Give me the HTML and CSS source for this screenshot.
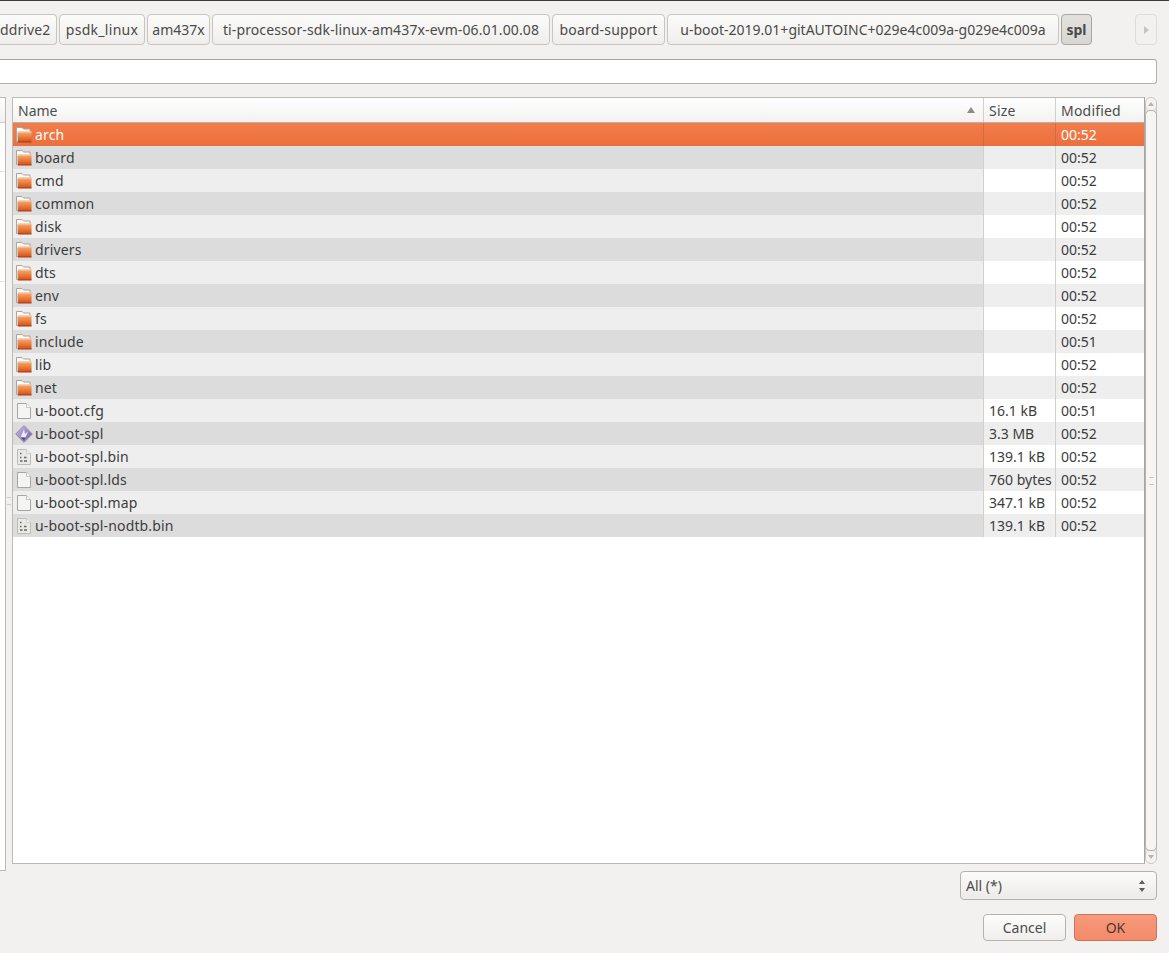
FILE: index.html
```html
<!DOCTYPE html>
<html lang="en">
<head>
<meta charset="utf-8">
<title>Open file</title>
<link rel="stylesheet" href="styles.css">
</head>
<body>
<svg class="defs" width="0" height="0" aria-hidden="true">
  <defs>
    <linearGradient id="fg" x1="0" y1="0" x2="0" y2="1"><stop offset="0" stop-color="#f5ad78"/><stop offset=".5" stop-color="#ec7f3c"/><stop offset="1" stop-color="#d24f1a"/></linearGradient>
    <linearGradient id="dg" x1="0" y1="0" x2="1" y2="1"><stop offset="0" stop-color="#cfc6ea"/><stop offset="1" stop-color="#6a52a6"/></linearGradient>
    <symbol id="folder" viewBox="0 0 16 16">
      <path d="M.5 14.500V.5h5.500l1.500 1.500h6.500v3.500h-12v9z" fill="#fbfbfa" stroke="#a8a4a0"/>
      <rect x="2" y="4.500" width="13.500" height="10.500" fill="url(#fg)"/>
      <rect x="2" y="4.500" width="13.500" height="1" fill="#f8cfae"/>
      <rect x="2" y="14.500" width="13.500" height="1" fill="#a8381a"/>
    </symbol>
    <symbol id="file" viewBox="0 0 16 16">
      <path d="M1.500.5h9l4 4v11h-13z" fill="#f4f4f3" stroke="#a6a6a4"/>
      <path d="M10.500.5v4h4" fill="#fff" stroke="#c4c4c2"/>
    </symbol>
    <symbol id="bin" viewBox="0 0 16 16">
      <path d="M1.500.5h9l4 4v11h-13z" fill="#e9e9e7" stroke="#bcbcba"/>
      <path d="M10.500.5v4h4" fill="#f6f6f5" stroke="#cfcfcd"/>
      <path d="M4 4.500h1.500M4 8.500h1.500M8 8.500h2.500M4 12h2.500M8 12h3" stroke="#66665f" stroke-width="1.300" fill="none"/>
    </symbol>
    <symbol id="exec" viewBox="0 0 18 18">
      <path d="M9 .7 17.300 9 9 17.300.7 9z" fill="url(#dg)" stroke="#8e8a99"/>
      <path d="M5.500 12.500 9 4.500 10 9l3-2.500-2.500 6z" fill="#f1edfa"/>
      <path d="M5.500 12.500 10.500 12.500 9 15z" fill="#57408f"/>
    </symbol>
  </defs>
</svg>
<div class="path-bar">
  <button class="crumb crumb-cut">ddrive2</button>
  <button class="crumb crumb-psdk">psdk_linux</button>
  <button class="crumb crumb-am">am437x</button>
  <button class="crumb crumb-ti">ti-processor-sdk-linux-am437x-evm-06.01.00.08</button>
  <button class="crumb crumb-board">board-support</button>
  <button class="crumb crumb-uboot">u-boot-2019.01+gitAUTOINC+029e4c009a-g029e4c009a</button>
  <button class="crumb crumb-active">spl</button>
  <button class="crumb-next" aria-label="Next"><span class="tri-right"></span></button>
</div>
<div class="entry"></div>
<div class="panes">
  <aside class="sidebar">
    <div class="side-head"></div>
    <div class="side-line"></div>
    <div class="side-line side-line-tall"></div>
  </aside>
  <div class="grip"></div>
  <div class="tree">
    <div class="tree-head">
      <div class="th th-name"><span>Name</span><span class="sort"></span></div>
      <div class="th">Size</div>
      <div class="th">Modified</div>
    </div>
    <div class="row row-sel"><div class="c c-name"><svg class="ico"><use href="#folder"/></svg>arch</div><div class="c"></div><div class="c c-time">00:52</div></div>
    <div class="row row-odd"><div class="c c-name"><svg class="ico"><use href="#folder"/></svg>board</div><div class="c"></div><div class="c c-time">00:52</div></div>
    <div class="row"><div class="c c-name"><svg class="ico"><use href="#folder"/></svg>cmd</div><div class="c"></div><div class="c c-time">00:52</div></div>
    <div class="row row-odd"><div class="c c-name"><svg class="ico"><use href="#folder"/></svg>common</div><div class="c"></div><div class="c c-time">00:52</div></div>
    <div class="row"><div class="c c-name"><svg class="ico"><use href="#folder"/></svg>disk</div><div class="c"></div><div class="c c-time">00:52</div></div>
    <div class="row row-odd"><div class="c c-name"><svg class="ico"><use href="#folder"/></svg>drivers</div><div class="c"></div><div class="c c-time">00:52</div></div>
    <div class="row"><div class="c c-name"><svg class="ico"><use href="#folder"/></svg>dts</div><div class="c"></div><div class="c c-time">00:52</div></div>
    <div class="row row-odd"><div class="c c-name"><svg class="ico"><use href="#folder"/></svg>env</div><div class="c"></div><div class="c c-time">00:52</div></div>
    <div class="row"><div class="c c-name"><svg class="ico"><use href="#folder"/></svg>fs</div><div class="c"></div><div class="c c-time">00:52</div></div>
    <div class="row row-odd"><div class="c c-name"><svg class="ico"><use href="#folder"/></svg>include</div><div class="c"></div><div class="c c-time">00:51</div></div>
    <div class="row"><div class="c c-name"><svg class="ico"><use href="#folder"/></svg>lib</div><div class="c"></div><div class="c c-time">00:52</div></div>
    <div class="row row-odd"><div class="c c-name"><svg class="ico"><use href="#folder"/></svg>net</div><div class="c"></div><div class="c c-time">00:52</div></div>
    <div class="row"><div class="c c-name"><svg class="ico"><use href="#file"/></svg>u-boot.cfg</div><div class="c">16.1 kB</div><div class="c c-time">00:51</div></div>
    <div class="row row-odd"><div class="c c-name"><svg class="ico ico-exec"><use href="#exec"/></svg>u-boot-spl</div><div class="c">3.3 MB</div><div class="c c-time">00:52</div></div>
    <div class="row"><div class="c c-name"><svg class="ico"><use href="#bin"/></svg>u-boot-spl.bin</div><div class="c">139.1 kB</div><div class="c c-time">00:52</div></div>
    <div class="row row-odd"><div class="c c-name"><svg class="ico"><use href="#file"/></svg>u-boot-spl.lds</div><div class="c">760 bytes</div><div class="c c-time">00:52</div></div>
    <div class="row"><div class="c c-name"><svg class="ico"><use href="#file"/></svg>u-boot-spl.map</div><div class="c">347.1 kB</div><div class="c c-time">00:52</div></div>
    <div class="row row-odd"><div class="c c-name"><svg class="ico"><use href="#bin"/></svg>u-boot-spl-nodtb.bin</div><div class="c">139.1 kB</div><div class="c c-time">00:52</div></div>
  </div>
  <div class="scrollbar">
    <div class="sb-arrow"><span class="tri-up"></span></div>
    <div class="sb-thumb"><span class="sb-grip"></span></div>
    <div class="sb-arrow"><span class="tri-down"></span></div>
  </div>
</div>
<div class="filter-row">
  <div class="combo"><span>All (*)</span><span class="combo-arrows"><span class="tri-up tri-dark"></span><span class="tri-down tri-dark"></span></span></div>
</div>
<div class="actions">
  <button class="btn">Cancel</button>
  <button class="btn btn-ok">OK</button>
</div>
</body>
</html>
```
FILE: styles.css
```css
* { box-sizing: border-box; }
html, body { margin: 0; padding: 0; }
body {
  width: 1169px;
  height: 953px;
  overflow: hidden;
  background: #f2f1f0;
  border-top: 1px solid #3c3b37;
  font-family: "Noto Sans", "Open Sans", sans-serif;
  font-size: 14px;
  color: #3c3c3c;
}
.defs { position: absolute; }
button { font: inherit; color: inherit; margin: 0; }

.path-bar { display: flex; gap: 2px; height: 31px; margin-top: 13px; }
.crumb {
  height: 31px;
  padding: 0;
  text-align: center;
  white-space: nowrap;
  border: 1px solid #c9c5c0;
  border-radius: 4px;
  background: linear-gradient(#fbfbfa, #efeeec);
  color: #4a4a48;
  flex: none;
}
.crumb-cut { width: 57px; border-left: 0; border-radius: 0 4px 4px 0; text-align: left; letter-spacing: .12px; }
.crumb-psdk { width: 86px; letter-spacing: .3px; }
.crumb-am { width: 63px; }
.crumb-ti { width: 338px; letter-spacing: .12px; }
.crumb-board { width: 113px; letter-spacing: .2px; }
.crumb-uboot { width: 392px; }
.crumb-active {
  width: 31px;
  margin-right: 41px;
  font-weight: 700;
  border-color: #aaa6a1;
  background: linear-gradient(#e2e0dd, #d9d7d4);
}
.crumb-next {
  width: 22px;
  height: 31px;
  padding: 0;
  display: flex;
  align-items: center;
  justify-content: center;
  border: 1px solid #dedbd8;
  border-radius: 4px;
  background: #f2f1f0;
}
.tri-right { border-left: 5px solid #c6c3bf; border-top: 4px solid transparent; border-bottom: 4px solid transparent; }

.entry {
  width: 1160px;
  height: 25px;
  margin: 14px 0 0 -3px;
  background: #fff;
  border: 1px solid #b5b1ac;
  border-top-color: #a9a5a0;
  border-radius: 3px;
}

.panes { display: flex; height: 767px; margin-top: 13px; }
.sidebar {
  flex: none;
  width: 6px;
  height: 774px;
  background: #fff;
  border: 1px solid #bdbab5;
  border-left: 0;
}
.side-head { height: 25px; background: linear-gradient(#fff, #f1f0ef); border-bottom: 1px solid #cfccc8; }
.side-line { height: 49px; border-bottom: 1px solid #e6e4e2; }
.side-line-tall { height: 110px; }
.grip { flex: none; width: 6px; }
.grip::after {
  content: "";
  display: block;
  width: 4px;
  height: 6px;
  margin: 400px 0 0 1px;
  border-top: 1px solid #cdcac6;
  border-bottom: 1px solid #cdcac6;
}

.tree {
  flex: none;
  width: 1133px;
  background: #fff;
  border: 1px solid #bdbab5;
  border-right-color: #a9a6a1;
}
.tree-head {
  display: grid;
  grid-template-columns: 971px 72px 1fr;
  height: 25px;
  background: linear-gradient(#fff, #f3f2f1);
  border-bottom: 1px solid #b5b1ac;
}
.th {
  display: flex;
  align-items: center;
  padding-left: 5px;
  color: #4c4c4c;
  letter-spacing: .2px;
  border-right: 1px solid #d3d0cc;
}
.th-name { justify-content: space-between; padding-right: 8px; letter-spacing: 0; }
.th:last-child { border-right: 0; }
.sort { border-bottom: 6px solid #8e8b87; border-left: 4px solid transparent; border-right: 4px solid transparent; }

.row {
  display: grid;
  grid-template-columns: 971px 72px 1fr;
  height: 23px;
  line-height: 23px;
  background: #fff;
}
.c { padding-left: 5px; white-space: nowrap; overflow: hidden; border-right: 1px solid #d3d0cc; }
.c:last-child { border-right: 0; }
.c-name { display: flex; align-items: center; padding-left: 3px; background: #eeeeee; letter-spacing: .14px; }
.row-odd { background: #eeeeee; }
.row-odd .c-name { background: #dcdcdc; }
.row-sel { background: linear-gradient(#f47d4c, #ea6f3c); color: #fff; }
.row-sel .c { border-right-color: #d56a3c; }
.row-sel .c-name { background: none; }
.ico { flex: none; width: 16px; height: 16px; margin-right: 3px; }
.ico-exec { width: 18px; height: 18px; margin: 0 2px 0 -1px; }

.scrollbar {
  flex: none;
  width: 12px;
  display: flex;
  flex-direction: column;
  background: #e7e5e3;
  border: 1px solid #c9c6c2;
  border-radius: 6px;
}
.sb-arrow { flex: none; height: 12px; display: flex; align-items: center; justify-content: center; background: #f4f3f2; border-radius: 6px; }
.sb-thumb {
  flex: 1;
  display: flex;
  align-items: center;
  justify-content: center;
  margin: 0 -1px;
  background: #f6f5f4;
  border: 1px solid #b5b1ac;
  border-radius: 5px;
}
.sb-grip { width: 5px; height: 8px; border-top: 1px solid #c9c6c2; border-bottom: 1px solid #c9c6c2; }
.tri-up { border-bottom: 4px solid #b7b4b0; border-left: 3px solid transparent; border-right: 3px solid transparent; }
.tri-down { border-top: 4px solid #b7b4b0; border-left: 3px solid transparent; border-right: 3px solid transparent; }
.tri-dark { border-top-color: #5e5c59; border-bottom-color: #5e5c59; }
.tri-up.tri-dark { border-top-color: transparent; }
.tri-down.tri-dark { border-bottom-color: transparent; }

.filter-row { display: flex; justify-content: flex-end; padding: 7px 12px 0 0; }
.combo {
  display: flex;
  align-items: center;
  justify-content: space-between;
  width: 197px;
  height: 29px;
  padding: 0 11px 0 5px;
  background: linear-gradient(#fbfbfa, #ecebe9);
  border: 1px solid #b5b1ac;
  border-radius: 4px;
  color: #4c4c4c;
}
.combo-arrows { display: flex; flex-direction: column; gap: 4px; }

.actions { display: flex; justify-content: flex-end; gap: 8px; padding: 14px 12px 0 0; }
.btn {
  width: 83px;
  height: 27px;
  padding: 0;
  border: 1px solid #b5b1ac;
  border-radius: 4px;
  background: linear-gradient(#fdfdfc, #efeeec);
  color: #4c4c4c;
}
.btn-ok { background: linear-gradient(#f79a7c, #f38a69); border-color: #c9765a; color: #4a3a34; }
```
